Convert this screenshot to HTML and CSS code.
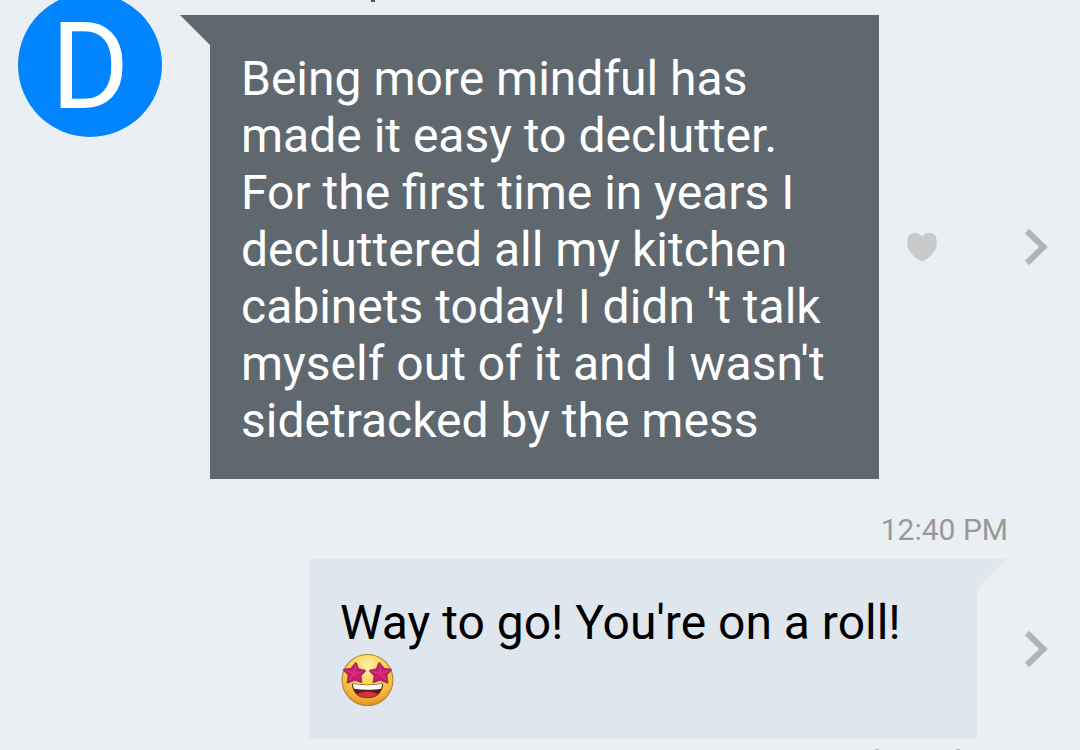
FILE: index.html
```
<!DOCTYPE html>
<html lang="en">
<head>
    <meta charset="UTF-8">
    <meta name="viewport" content="width=device-width, initial-scale=1.0">
    <title>Messages</title>
    <link rel="stylesheet" href="styles.css">
</head>
<body>
    <main class="thread">
        <!-- tail of the sender line, scrolled off the top -->
        <span class="clipped clipped-top"></span>

        <div class="message received">
            <div class="avatar">D</div>
            <p class="bubble">Being more mindful has made it easy to declutter. For the first time in years I decluttered all my kitchen cabinets today! I didn 't talk myself out of it and I wasn't sidetracked by the mess</p>
            <button class="like" aria-label="Like">
                <svg width="30" height="29" viewBox="0 0 30 29">
                    <path d="M15 3.500C13 1 10.500 0 8 0 3 0 .3 2.500 .3 8v3c0 7 7 14 14.700 17.500C22.700 25 29.700 18 29.700 11V8C29.700 2.500 27 0 22 0 19.500 0 17 1 15 3.500z" fill="#c8caca"/>
                </svg>
            </button>
            <button class="more" aria-label="More">
                <svg width="24" height="36" viewBox="0 0 24 36">
                    <path d="M3 2l16.500 16L3 34" fill="none" stroke="#adb4bb" stroke-width="6"/>
                </svg>
            </button>
        </div>

        <time class="time">12:40 PM</time>

        <div class="message sent">
            <p class="bubble">Way to go! You're on a roll!
                <svg class="emoji" role="img" aria-label="Star-struck" viewBox="0 0 52 52">
                    <defs>
                        <radialGradient id="face" cx="50%" cy="25%" r="75%">
                            <stop offset="0" stop-color="#fff3b0"/>
                            <stop offset=".4" stop-color="#fcd855"/>
                            <stop offset=".75" stop-color="#f8bd35"/>
                            <stop offset="1" stop-color="#e08f20"/>
                        </radialGradient>
                    </defs>
                    <circle cx="26" cy="26" r="25" fill="url(#face)" stroke="#a98243" stroke-width="1"/>
                    <path d="M12 29.500c9 1.500 19 1.500 28 0 1 0 1.500 .7 1.300 1.700C40 39.500 34 44 26 44S12 39.500 10.700 31.200c-.2-1 .3-1.700 1.300-1.700z" fill="#5c1c1c"/>
                    <path d="M16 40c5-3.500 15-3.500 20 0-3 2.700-6 3.500-10 3.500s-7-.8-10-3.500z" fill="#d5333d"/>
                    <path d="M12.500 30c9 1.400 18 1.400 27 0 .7 0 1 .5 .8 1.200l-1 3.300c-8 1.300-18 1.300-26.600 0l-1-3.300c-.2-.7 .1-1.200 .8-1.200z" fill="#fff"/>
                    <g fill="#d01c74" stroke="#b0245f" stroke-width="2" stroke-linejoin="round">
                        <path d="M14.500 9.500l2.500 6 6.500 1.500-4.500 4.500 1 6.500-6.500-2.500-7 3 1-7.500L3 16l7-1z"/>
                        <path d="M37.500 9.500L35 15.500 28.500 17l4.500 4.500-1 6.500 6.500-2.500 7 3-1-7.500L49 16l-7-1z"/>
                    </g>
                    <path d="M14 11l-1 9-7-3M13 20l8-2M13 20l-5 6M38 11l1 9-8-2M39 20l7-3M39 20l5 6" fill="none" stroke="#e04a90" stroke-width="1" opacity=".7"/>
                </svg>
            </p>
            <button class="more" aria-label="More">
                <svg width="24" height="36" viewBox="0 0 24 36">
                    <path d="M3 2l16.500 16L3 34" fill="none" stroke="#adb4bb" stroke-width="6"/>
                </svg>
            </button>
        </div>

        <!-- top of the next time stamp -->
        <span class="clipped clipped-bottom"></span>
    </main>
</body>
</html>
```

FILE: styles.css
```
* {
    box-sizing: border-box;
}

body {
    margin: 0;
    height: 100vh;
    overflow: hidden;
    background-color: #eaeff3;
    font-family: Roboto, Arial, sans-serif;
}

.thread {
    position: relative;
    display: flex;
    flex-direction: column;
    min-height: 100vh;
    padding-top: 15px;
}

.message {
    display: flex;
    align-items: center;
    padding: 0 32px 0 18px;
}

.avatar {
    flex: none;
    align-self: flex-start;
    width: 144px;
    height: 144px;
    margin: -22px 48px 0 0;
    padding-top: 14px;
    border-radius: 50%;
    background-color: #0084ff;
    color: #fff;
    font-size: 120px;
    line-height: 120px;
    text-align: center;
}

.bubble {
    position: relative;
    margin: 0;
    padding: 35px 31px 30px;
    font-size: 48px;
    line-height: 57px;
}

/* corner that points at the sender */
.bubble::before {
    content: "";
    position: absolute;
    top: 0;
    width: 30px;
    height: 30px;
    background-color: inherit;
}

.received .bubble {
    flex: 1;
    background-color: #60686f;
    color: #fff;
}

.received .bubble::before {
    right: 100%;
    clip-path: polygon(0 0, 100% 0, 100% 100%);
}

.sent {
    padding-left: 309px;
}

.sent .bubble {
    flex: 1;
    margin-right: 47px;
    background-color: #dfe6ed;
    color: #000;
}

.sent .bubble::before {
    left: 100%;
    clip-path: polygon(0 0, 100% 0, 0 100%);
}

.emoji {
    display: block;
    width: 54px;
    height: 57px;
    padding: 1px 0 0 1px;
}

button {
    display: flex;
    flex: none;
    padding: 0;
    border: none;
    background: none;
    cursor: pointer;
}

.like {
    margin: 0 87px 0 28px;
}

.time {
    padding: 33px 72px 11px 0;
    color: #999;
    font-size: 30px;
    line-height: 36px;
    text-align: right;
}

.clipped {
    position: absolute;
    width: 4px;
    height: 2px;
    background-color: #50555a;
}

.clipped-top {
    top: 0;
    left: 371px;
}

.clipped-bottom {
    top: 749px;
    left: 875px;
    height: 1px;
    background-color: #b4b8bb;
    box-shadow: 81px 0 #b4b8bb;
}
```
